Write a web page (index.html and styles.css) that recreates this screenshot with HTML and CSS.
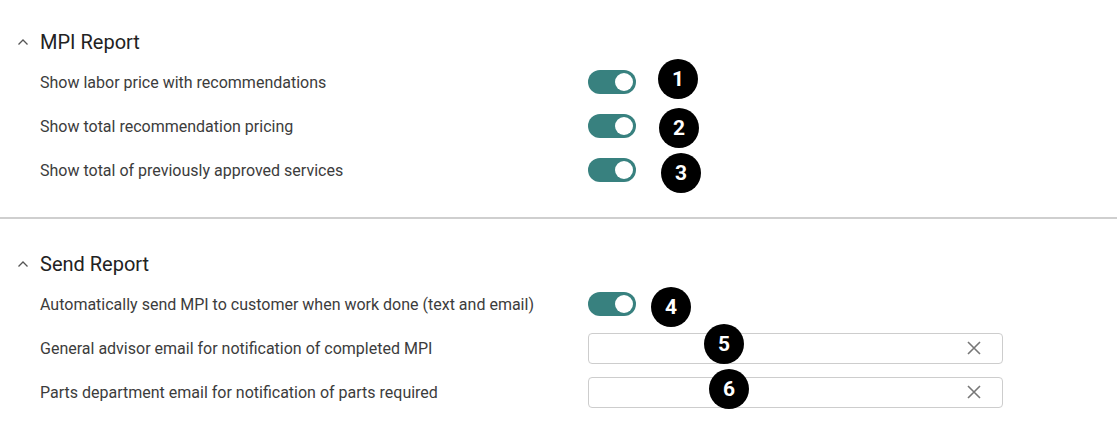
FILE: index.html
```
<!DOCTYPE html>
<html lang="en">
<head>
    <meta charset="UTF-8">
    <meta name="viewport" content="width=device-width, initial-scale=1.0">
    <title>Report Settings</title>
    <link rel="stylesheet" href="styles.css">
</head>
<body>

    <!-- MPI Report -->
    <div class="section first">
        <div class="section-header">
            <svg class="chevron" width="12" height="8" viewBox="0 0 12 8"><path d="M1.5 6.5 L6 2 L10.5 6.5" fill="none" stroke="#555" stroke-width="1.3"/></svg>
            <h2>MPI Report</h2>
        </div>
        <div class="row">
            <div class="label">Show labor price with recommendations</div>
            <div class="control">
                <span class="toggle on"><span class="knob"></span></span>
                <span class="badge badge-1">1</span>
            </div>
        </div>
        <div class="row">
            <div class="label">Show total recommendation pricing</div>
            <div class="control">
                <span class="toggle on"><span class="knob"></span></span>
                <span class="badge badge-2">2</span>
            </div>
        </div>
        <div class="row">
            <div class="label">Show total of previously approved services</div>
            <div class="control">
                <span class="toggle on"><span class="knob"></span></span>
                <span class="badge badge-3">3</span>
            </div>
        </div>
    </div>

    <!-- Send Report -->
    <div class="section second">
        <div class="section-header">
            <svg class="chevron" width="12" height="8" viewBox="0 0 12 8"><path d="M1.5 6.5 L6 2 L10.5 6.5" fill="none" stroke="#555" stroke-width="1.3"/></svg>
            <h2>Send Report</h2>
        </div>
        <div class="row">
            <div class="label">Automatically send MPI to customer when work done (text and email)</div>
            <div class="control">
                <span class="toggle on"><span class="knob"></span></span>
                <span class="badge badge-4">4</span>
            </div>
        </div>
        <div class="row">
            <div class="label">General advisor email for notification of completed MPI</div>
            <div class="control">
                <div class="text-input">
                    <input type="text">
                    <svg class="clear" width="16" height="16" viewBox="0 0 16 16"><path d="M2 2 L14 14 M14 2 L2 14" stroke="#777" stroke-width="1.6"/></svg>
                </div>
                <span class="badge badge-5">5</span>
            </div>
        </div>
        <div class="row">
            <div class="label">Parts department email for notification of parts required</div>
            <div class="control">
                <div class="text-input">
                    <input type="text">
                    <svg class="clear" width="16" height="16" viewBox="0 0 16 16"><path d="M2 2 L14 14 M14 2 L2 14" stroke="#777" stroke-width="1.6"/></svg>
                </div>
                <span class="badge badge-6">6</span>
            </div>
        </div>
    </div>

</body>
</html>
```

FILE: styles.css
```
body {
    font-family: 'Roboto', 'Liberation Sans', sans-serif;
    margin: 0;
    padding: 0;
    background-color: #fff;
    color: #333;
}

.section {
    padding-left: 16px;
}

.section.first {
    padding-top: 24px;
    padding-bottom: 25px;
    border-bottom: 2px solid #cfcfcf;
}

.section.second {
    padding-top: 27px;
}

.section.second .row:first-of-type {
    margin-top: 1px;
}

.section-header {
    display: flex;
    align-items: center;
    height: 36px;
}

.chevron {
    margin-left: 1px;
    margin-right: 11px;
}

.section-header h2 {
    margin: 0;
    font-size: 20px;
    font-weight: 400;
    color: #222;
}

.row {
    display: grid;
    grid-template-columns: 548px 415px;
    align-items: center;
    height: 44px;
    padding-left: 24px;
}

.label {
    font-size: 16px;
    color: #3c3c3c;
}

.control {
    position: relative;
    height: 44px;
    display: flex;
    align-items: center;
}

.toggle {
    width: 48px;
    height: 24px;
    border-radius: 12px;
    background-color: #38817f;
    display: flex;
    align-items: center;
    justify-content: flex-end;
    padding-right: 3px;
    box-sizing: border-box;
}

.knob {
    width: 18px;
    height: 18px;
    border-radius: 50%;
    background-color: #fff;
}

.text-input {
    width: 100%;
    height: 31px;
    border: 1px solid #cdcdcd;
    border-radius: 4px;
    box-sizing: border-box;
    display: flex;
    align-items: center;
    padding: 0 20px 0 8px;
}

.text-input input {
    flex: 1;
    border: none;
    outline: none;
    font-size: 14px;
    background: transparent;
}

.clear {
    flex-shrink: 0;
}

/* Numbered callouts */
.badge {
    position: absolute;
    width: 40px;
    height: 40px;
    border-radius: 50%;
    background-color: #000;
    color: #fff;
    font-family: 'Roboto', 'Liberation Sans', Arial, sans-serif;
    font-weight: bold;
    font-size: 21px;
    display: flex;
    align-items: center;
    justify-content: center;
}

.badge-1 { left: 70px; top: -1px; }
.badge-2 { left: 71px; top: 4px; }
.badge-3 { left: 73px; top: 5px; }
.badge-4 { left: 63px; top: 5px; }
.badge-5 { left: 116px; top: -2px; }
.badge-6 { left: 121px; top: -1px; }
```
